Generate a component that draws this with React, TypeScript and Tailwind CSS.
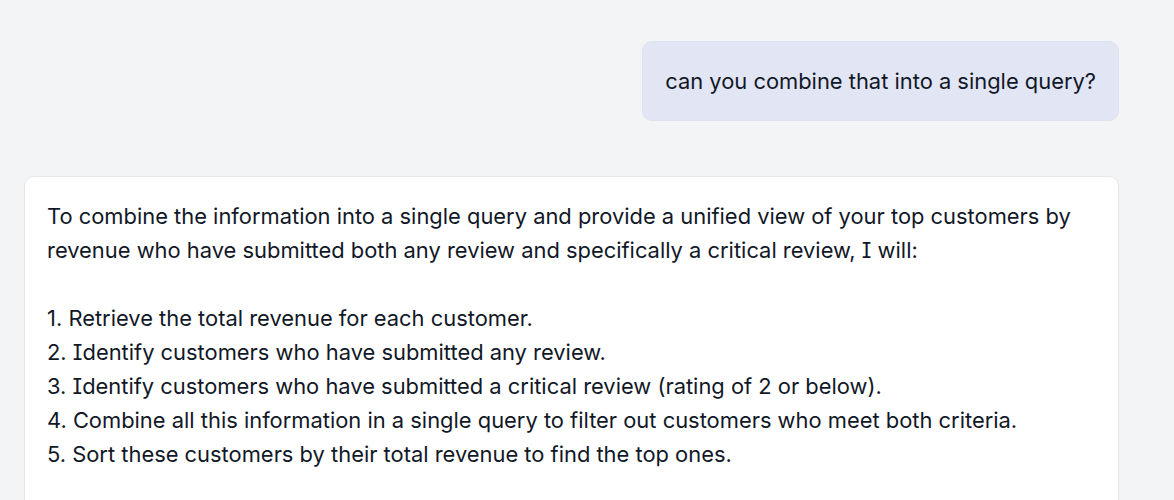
const steps = [
  'Retrieve the total revenue for each customer.',
  'Identify customers who have submitted any review.',
  'Identify customers who have submitted a critical review (rating of 2 or below).',
  'Combine all this information in a single query to filter out customers who meet both criteria.',
  'Sort these customers by their total revenue to find the top ones.',
]

function UserMessage({ text }: { text: string }) {
  return (
    <div className="flex justify-end">
      <div className="rounded-[10px] border border-[#dde1f0] bg-[#e2e5f4] px-[22px] py-[22px] text-[21.9px] leading-[34px] text-[#111827]">
        {text}
      </div>
    </div>
  )
}

function AssistantMessage() {
  return (
    <div className="rounded-[10px] border border-[#e5e7eb] bg-white px-[22px] pt-[22px] pb-10 text-[21.9px] leading-[34px] text-[#111827]">
      <p>
        To combine the information into a single query and provide a unified view of your top customers by
        revenue who have submitted both any review and specifically a critical review, I will:
      </p>
      <div className="h-[34px]" />
      <ol>
        {steps.map((s, i) => (
          <li key={i}>
            {i + 1}. {s}
          </li>
        ))}
      </ol>
    </div>
  )
}

export default function App() {
  return (
    <div className="min-h-[500px] bg-[#f3f4f6] pl-6 pr-[55px] pt-[41px] font-['Inter','Noto_Sans',sans-serif] [font-feature-settings:'cv08']">
      <UserMessage text="can you combine that into a single query?" />
      <div className="h-[55px]" />
      <AssistantMessage />
    </div>
  )
}
